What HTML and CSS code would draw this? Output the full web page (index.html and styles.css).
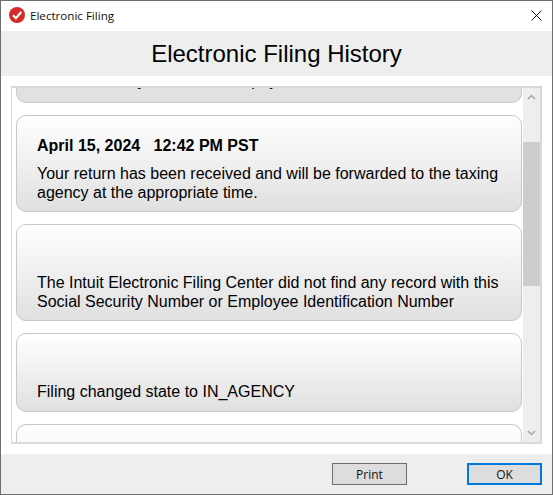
FILE: index.html
```html
<!DOCTYPE html>
<html lang="en">
<head>
<meta charset="utf-8">
<title>Electronic Filing</title>
<link rel="stylesheet" href="styles.css">
</head>
<body>
<div class="window">
  <div class="titlebar">
    <svg class="app-icon" width="16" height="16" viewBox="0 0 16 16"><circle cx="8" cy="8" r="8" fill="#d52b2b"/><path d="M4 8.2l2.9 3L12.2 5" fill="none" stroke="#fff" stroke-width="2.2"/></svg>
    <span class="title-text">Electronic Filing</span>
    <svg class="close-icon" width="11" height="11" viewBox="0 0 11 11"><path d="M.5.5l10 10M10.5.5l-10 10" fill="none" stroke="#111" stroke-width="1"/></svg>
  </div>
  <div class="header">Electronic Filing History</div>
  <div class="content">
    <div class="panel">
      <div class="list">
        <div class="card card-top"><p class="msg">Return is ready and has been payment</p></div>
        <div class="card card-tall">
          <p class="stamp">April 15, 2024&nbsp;&nbsp; 12:42 PM PST</p>
          <p class="msg">Your return has been received and will be forwarded to the taxing agency at the appropriate time.</p>
        </div>
        <div class="card card-tall">
          <p class="stamp">&nbsp;</p>
          <p class="msg">The Intuit Electronic Filing Center did not find any record with this Social Security Number or Employee Identification Number</p>
        </div>
        <div class="card card-short">
          <p class="stamp">&nbsp;</p>
          <p class="msg">Filing changed state to IN_AGENCY</p>
        </div>
        <div class="card card-bottom"></div>
      </div>
      <div class="scrollbar">
        <svg class="arrow" width="9" height="6" viewBox="0 0 9 6"><path d="M1 5l3.5-3.5L8 5" fill="none" stroke="#a6a6a6" stroke-width="1.5"/></svg>
        <div class="track"><div class="thumb"></div></div>
        <svg class="arrow" width="9" height="6" viewBox="0 0 9 6"><path d="M1 1l3.5 3.5L8 1" fill="none" stroke="#a6a6a6" stroke-width="1.5"/></svg>
      </div>
    </div>
  </div>
  <div class="footer">
    <button class="btn btn-print">Print</button>
    <button class="btn btn-ok">OK</button>
  </div>
</div>
</body>
</html>
```
FILE: styles.css
```css
* { box-sizing: border-box; }
html, body { margin: 0; padding: 0; }
body { width: 553px; height: 495px; overflow: hidden; background: #fff; }
p { margin: 0; }
.window {
  width: 553px; height: 495px;
  border: 1px solid #6f6f6f;
  display: flex; flex-direction: column;
  background: #fff;
  font-family: "Liberation Sans", Arial, sans-serif;
  color: #000;
}
.titlebar {
  height: 30px; flex: none;
  display: flex; align-items: center;
  padding: 0 10px 2px 8px;
  background: #fff;
}
.app-icon { flex: none; }
.title-text { margin-left: 5px; font: 11.6px "Open Sans", "Noto Sans", sans-serif; color: #111; }
.close-icon { margin-left: auto; }
.header {
  height: 45px; flex: none;
  background: #eeeeee;
  display: flex; align-items: center; justify-content: center;
  font-size: 24px;
}
.content { flex: 1; min-height: 0; padding: 10px 10px 10px 10px; background: #fff; }
.panel {
  height: 100%;
  border: 1px solid #d9d9d9;
  border-width: 2px 2px 2px 1px;
  display: flex;
  background: #fff;
}
.list {
  flex: 1; min-width: 0;
  padding-left: 4px;
  display: flex; flex-direction: column; gap: 12px;
  overflow: hidden;
}
.card {
  flex: none;
  width: 506px;
  border: 1px solid #c8c8c8;
  border-radius: 10px;
  padding: 21px 20px 0;
  background: linear-gradient(#ffffff, #e0e0e0);
  font-size: 16px; line-height: 19px;
  overflow: hidden;
}
.card-top {
  height: 15px;
  padding: 0 20px 12px;
  border-top: 0;
  border-radius: 0 0 10px 10px;
  background: #e1e1e1;
  display: flex; align-items: flex-end;
}
.card-tall { height: 97px; }
.card-short { height: 79px; }
.card-bottom { height: 30px; flex: none; border-bottom: 0; border-radius: 10px 10px 0 0; background: linear-gradient(#fff, #f6f6f6); }
.stamp { font-weight: bold; line-height: 18px; }
.msg { margin-top: 9px; }
.card-top .msg { margin: 0; white-space: nowrap; }
.scrollbar {
  flex: none; width: 17px;
  background: #eeeeee;
  display: flex; flex-direction: column; align-items: center;
}
.arrow { flex: none; margin: 6px 0; }
.track { flex: 1; width: 100%; padding-top: 36px; }
.thumb { height: 144px; background: #cdcdcd; }
.footer {
  height: 40px; flex: none;
  background: #eeeeee;
  display: flex; align-items: flex-start; justify-content: flex-end;
  padding: 9px 10px 0 0;
  gap: 60px;
}
.btn {
  width: 75px; height: 22px; padding: 0;
  background: #dddddd;
  border: 1px solid #6f6f6f;
  font: 12px "Open Sans", "Noto Sans", sans-serif;
  color: #111;
}
.btn-ok { border: 2px solid #0078d7; }
```
